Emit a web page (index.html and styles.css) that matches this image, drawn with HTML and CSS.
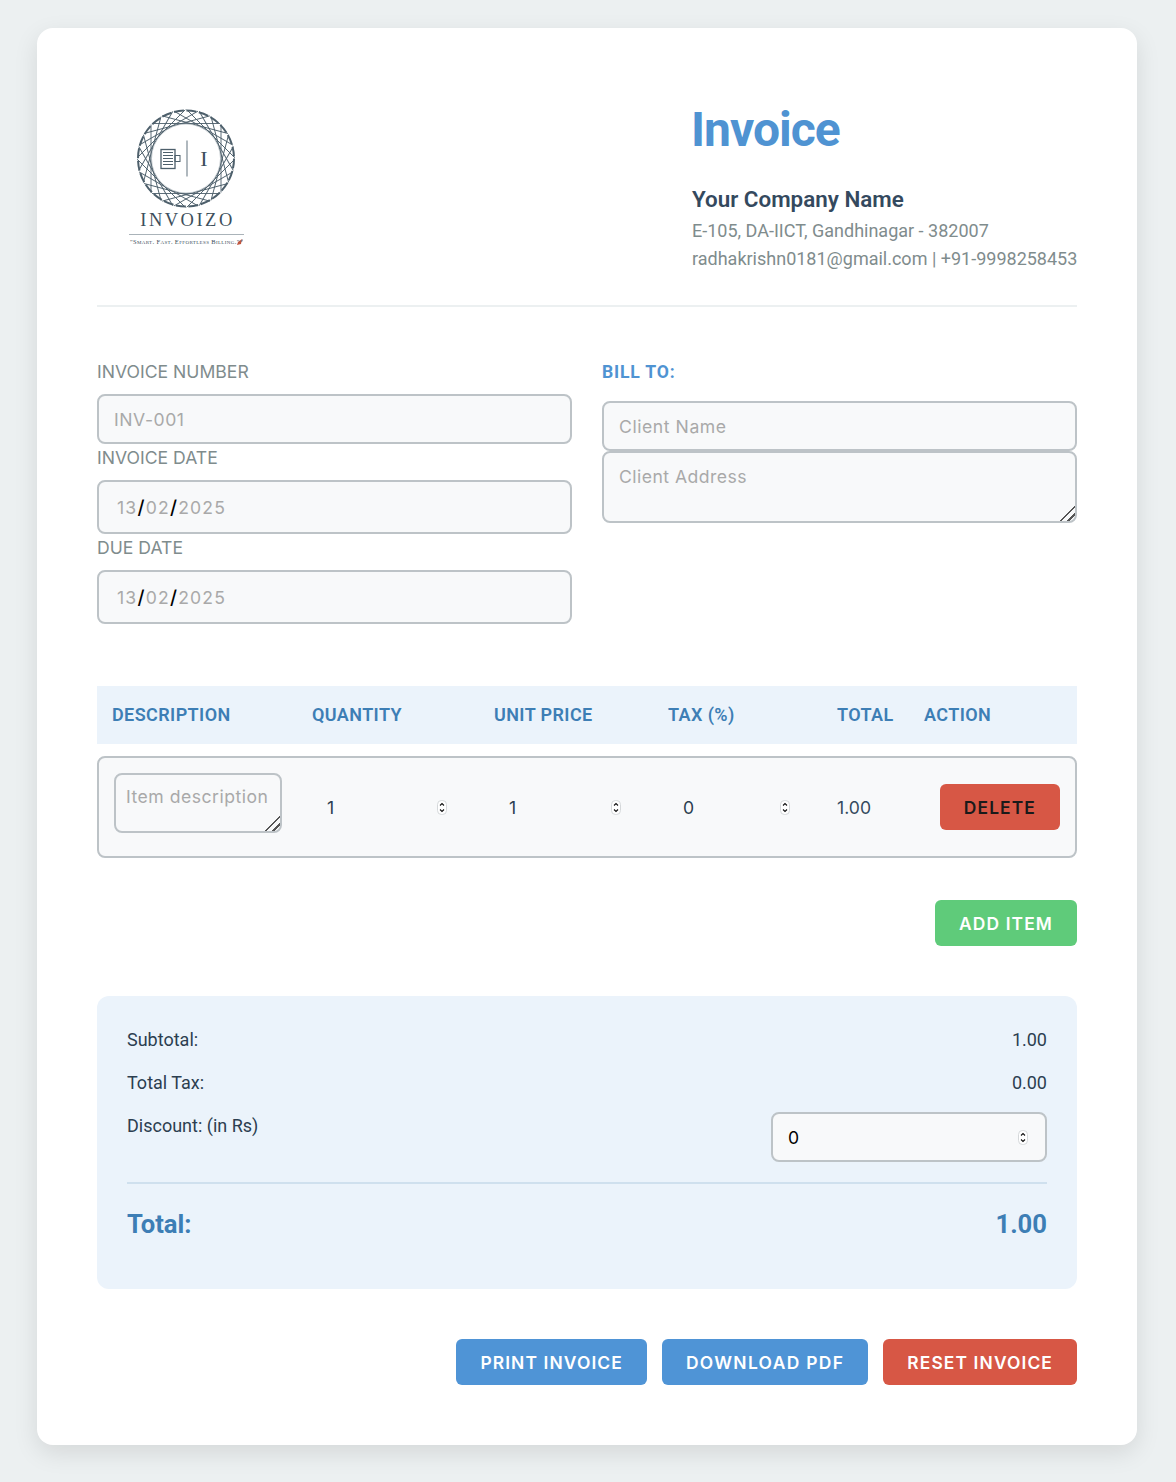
FILE: index.html
```html
<!DOCTYPE html>
<html lang="en">
  <head>
    <meta charset="UTF-8" />
    <title>Invoice</title>
    <link rel="stylesheet" href="styles.css">
  </head>
  <body>
    <div class="container">
      <header class="invoice-header">
        <div class="logo">
          <svg width="178" height="170" viewBox="0 0 178 170">
            <defs>
              <line id="c1" x1="-34" y1="-35" x2="34" y2="-35" />
              <g id="c2"><use href="#c1" /><use href="#c1" transform="rotate(15)" /></g>
              <g id="c4"><use href="#c2" /><use href="#c2" transform="rotate(30)" /></g>
              <g id="c8"><use href="#c4" /><use href="#c4" transform="rotate(60)" /></g>
            </defs>
            <g transform="translate(89 63.500)" fill="none" stroke="#4d5f6b">
              <g stroke-width="0.900">
                <use href="#c8" />
                <use href="#c8" transform="rotate(120)" />
                <use href="#c8" transform="rotate(240)" />
              </g>
              <circle r="48" stroke-width="2" stroke-dasharray="10 2.570" />
              <circle r="34.500" stroke="#8d99a1" stroke-width="0.500" fill="#fff" />
              <line x1="1" y1="-18" x2="1" y2="18" stroke="#7b8993" stroke-width="1.200" />
              <rect x="-25" y="-9" width="14" height="19" fill="#fff" stroke-width="1.300" />
              <path d="M-23 -6h10M-23 -3h10M-23 0h10M-23 3h10M-23 6h10" stroke-width="1.100" />
              <rect x="-11" y="-3" width="5" height="6" stroke-width="1" />
            </g>
            <text class="logo-i" x="107" y="71">I</text>
            <text class="logo-name" x="90.500" y="131">INVOIZO</text>
            <line x1="32" y1="139.500" x2="147" y2="139.500" stroke="#aab3b9" />
            <text class="logo-tag" x="33" y="149">"Smart. Fast. Effortless Billing."</text>
            <path d="M140 150l1-3 4-3-1 5z" fill="#c0563f" />
            <path d="M144 146l2-2-1 3z" fill="#3f5d86" />
          </svg>
        </div>
        <div class="company-info">
          <h1>Invoice</h1>
          <h2>Your Company Name</h2>
          <p>E-105, DA-IICT, Gandhinagar - 382007</p>
          <p>radhakrishn0181@gmail.com | +91-9998258453</p>
        </div>
      </header>

      <section class="details">
        <div class="details-col">
          <label class="field-label">Invoice Number</label>
          <input class="field first-field" type="text" placeholder="INV-001" />
          <label class="field-label">Invoice Date</label>
          <div class="field date-field"><span>13</span><b>/</b><span>02</span><b>/</b><span>2025</span></div>
          <label class="field-label">Due Date</label>
          <div class="field date-field"><span>13</span><b>/</b><span>02</span><b>/</b><span>2025</span></div>
        </div>
        <div class="details-col">
          <div class="bill-title">Bill To:</div>
          <input class="field" type="text" placeholder="Client Name" />
          <textarea class="field client-address" placeholder="Client Address"></textarea>
        </div>
      </section>

      <section class="items">
        <div class="items-head">
          <div>Description</div>
          <div>Quantity</div>
          <div>Unit Price</div>
          <div>Tax (%)</div>
          <div>Total</div>
          <div>Action</div>
        </div>
        <div class="item-row">
          <textarea class="field item-desc" placeholder="Item description"></textarea>
          <div class="num">
            <input type="text" value="1" />
            <svg class="spin" width="10" height="15" viewBox="0 0 10 15"><rect x="0.500" y="0.500" width="9" height="14" rx="4" /><path d="M3 5.500l2-2 2 2M3 9.500l2 2 2-2" /></svg>
          </div>
          <div class="num">
            <input type="text" value="1" />
            <svg class="spin" width="10" height="15" viewBox="0 0 10 15"><rect x="0.500" y="0.500" width="9" height="14" rx="4" /><path d="M3 5.500l2-2 2 2M3 9.500l2 2 2-2" /></svg>
          </div>
          <div class="num">
            <input type="text" value="0" />
            <svg class="spin" width="10" height="15" viewBox="0 0 10 15"><rect x="0.500" y="0.500" width="9" height="14" rx="4" /><path d="M3 5.500l2-2 2 2M3 9.500l2 2 2-2" /></svg>
          </div>
          <div class="item-total">1.00</div>
          <div class="item-action"><button class="btn btn-delete">Delete</button></div>
        </div>
      </section>

      <div class="add-row">
        <button class="btn btn-add">Add Item</button>
      </div>

      <section class="summary">
        <div class="summary-row"><span>Subtotal:</span><span>1.00</span></div>
        <div class="summary-row"><span>Total Tax:</span><span>0.00</span></div>
        <div class="summary-row discount-row">
          <span>Discount: (in Rs)</span>
          <div class="num discount">
            <input type="text" value="0" />
            <svg class="spin" width="10" height="15" viewBox="0 0 10 15"><rect x="0.500" y="0.500" width="9" height="14" rx="4" /><path d="M3 5.500l2-2 2 2M3 9.500l2 2 2-2" /></svg>
          </div>
        </div>
        <div class="summary-total"><span>Total:</span><span>1.00</span></div>
      </section>

      <div class="actions">
        <button class="btn btn-blue">Print Invoice</button>
        <button class="btn btn-blue btn-pdf">Download PDF</button>
        <button class="btn btn-red">Reset Invoice</button>
      </div>
    </div>
  </body>
</html>
```

FILE: styles.css
```css
* {
  box-sizing: border-box;
}
body {
  margin: 0;
  padding: 28px 39px 37px 37px;
  font-family: "Roboto", sans-serif;
  background-color: #ecf0f1;
  color: #2c3e50;
}
.container {
  width: 1100px;
  padding: 60px;
  background-color: #fff;
  border-radius: 16px;
  box-shadow: 0 8px 24px rgba(0, 0, 0, 0.1);
}

/* header */
.invoice-header {
  display: flex;
  justify-content: space-between;
  height: 219px;
  border-bottom: 2px solid #ecf0f1;
}
.logo {
  padding-top: 7px;
}
.logo svg {
  display: block;
}
.logo-i {
  font-family: "Liberation Serif", serif;
  font-size: 22px;
  fill: #3c4f5c;
  text-anchor: middle;
}
.logo-name {
  font-family: "Liberation Serif", serif;
  font-size: 18.500px;
  letter-spacing: 2.500px;
  fill: #3d4f5c;
  text-anchor: middle;
}
.logo-tag {
  font-family: "Liberation Serif", serif;
  font-size: 6.500px;
  font-variant: small-caps;
  letter-spacing: 0.350px;
  fill: #3d4f5c;
}
.company-info {
  width: 385px;
}
.company-info h1 {
  margin: 14px 0 0 -1px;
  font-size: 48px;
  line-height: 56px;
  font-weight: 700;
  letter-spacing: -1px;
  color: #4f93d2;
}
.company-info h2 {
  margin: 28px 0 5px;
  font-size: 22.400px;
  line-height: 26px;
  font-weight: 600;
  color: #34495e;
}
.company-info p {
  margin: 0;
  font-size: 18px;
  line-height: 28px;
  white-space: nowrap;
  color: #7f8c8d;
}

/* invoice details */
.details {
  display: grid;
  grid-template-columns: 475px 475px;
  gap: 30px;
  margin-top: 54px;
}
.details-col {
  display: flex;
  flex-direction: column;
}
.field-label {
  font-family: "Inter", sans-serif;
  font-size: 17.600px;
  line-height: 21px;
  text-transform: uppercase;
  color: #7f8c8d;
}
.field {
  width: 100%;
  height: 54px;
  margin: 12px 0 3px;
  padding: 0 15px;
  font-family: "Inter", sans-serif;
  font-size: 17.600px;
  letter-spacing: 0.550px;
  background-color: #f8f9fa;
  border: 2px solid #bdc3c7;
  border-radius: 8px;
  outline: none;
}
.first-field {
  height: 50px;
}
.field::placeholder {
  color: #a9a9a9;
}
.field::-webkit-resizer {
  background: linear-gradient(135deg, transparent 47%, #555 47% 56%, transparent 56% 73%, #555 73% 82%, transparent 82%);
}
.date-field {
  display: flex;
  align-items: center;
  padding-left: 18px;
  letter-spacing: 1.200px;
  color: #a9a9a9;
}
.date-field b {
  font-size: 19px;
  font-weight: 500;
  color: #000;
}
.bill-title {
  margin-bottom: 6px;
  padding-top: 1px;
  font-size: 17.600px;
  line-height: 21px;
  font-weight: 700;
  letter-spacing: 0.800px;
  text-transform: uppercase;
  color: #4f93d2;
}
.details-col > .bill-title + .field {
  height: 50px;
  margin: 12px 0 0;
}
.client-address {
  display: block;
  height: 72px;
  margin: 0;
  padding-top: 13px;
  letter-spacing: 0.450px;
}

/* items */
.items {
  margin-top: 59px;
}
.items-head {
  display: grid;
  grid-template-columns: 200px 182px 174px 169px 87px 1fr;
  align-items: center;
  height: 58px;
  padding: 0 0 2px 15px;
  font-size: 18px;
  font-weight: 600;
  letter-spacing: 0.400px;
  text-transform: uppercase;
  background-color: #ebf3fb;
  color: #3d7eb5;
}
.item-row {
  display: grid;
  grid-template-columns: 198px 182px 174px 169px 87px 1fr;
  align-items: center;
  height: 102px;
  margin-top: 12px;
  padding-left: 15px;
  padding-right: 15px;
  background-color: #f8f9fa;
  border: 2px solid #bdc3c7;
  border-radius: 8px;
}
.item-desc {
  display: block;
  width: 168px;
  height: 60px;
  margin: 0 0 8px;
  padding: 11px 10px;
  letter-spacing: 0.500px;
}
.num {
  display: flex;
  align-items: center;
  justify-content: space-between;
  padding: 0 7px 0 15px;
}
.item-row .num {
  margin-right: 40px;
}
.num input {
  width: 60px;
  padding: 0;
  font-family: "Inter", sans-serif;
  font-size: 17.600px;
  color: #2c3e50;
  background: transparent;
  border: none;
  outline: none;
}
.spin {
  flex: none;
  fill: #fff;
}
.spin rect {
  stroke: #d5d8da;
}
.spin path {
  fill: none;
  stroke: #111;
  stroke-width: 1.100;
}
.item-total {
  font-family: "Inter", sans-serif;
  font-size: 17.600px;
  color: #34495e;
}
.item-action {
  display: flex;
  justify-content: flex-end;
}

/* buttons */
.btn {
  height: 46px;
  padding: 0 24px;
  font-family: "Inter", sans-serif;
  font-size: 17.400px;
  font-weight: 600;
  letter-spacing: 1.120px;
  text-transform: uppercase;
  color: #fff;
  border: none;
  border-radius: 6px;
  cursor: pointer;
}
.btn-delete {
  background-color: #d75745;
  color: #1a1a1a;
}
.btn-red {
  background-color: #d75745;
}
.btn-add {
  background-color: #5fcb7a;
}
.btn-blue {
  background-color: #4f94d6;
}
.btn-pdf {
  letter-spacing: 1.350px;
}
.add-row {
  display: flex;
  justify-content: flex-end;
  margin-top: 42px;
}

/* summary */
.summary {
  margin-top: 50px;
  height: 293px;
  padding: 30px;
  background-color: #ebf3fb;
  border-radius: 12px;
}
.summary-row {
  display: flex;
  justify-content: space-between;
  height: 43px;
  font-size: 18px;
  line-height: 28px;
  color: #2c3e50;
}
.discount-row {
  height: 50px;
}
.discount-row > span {
  line-height: 28px;
}
.discount {
  width: 276px;
  height: 50px;
  padding-left: 15px;
  padding-right: 17px;
  background-color: #f8f9fa;
  border: 2px solid #bdc3c7;
  border-radius: 8px;
}
.discount input {
  color: #000;
}
.summary-total {
  display: flex;
  justify-content: space-between;
  margin-top: 20px;
  padding-top: 25px;
  font-size: 25.600px;
  line-height: 30px;
  font-weight: 700;
  color: #3d7eb5;
  border-top: 2px solid #cfe0ee;
}

.actions {
  display: flex;
  justify-content: flex-end;
  gap: 15px;
  margin-top: 50px;
}
```
